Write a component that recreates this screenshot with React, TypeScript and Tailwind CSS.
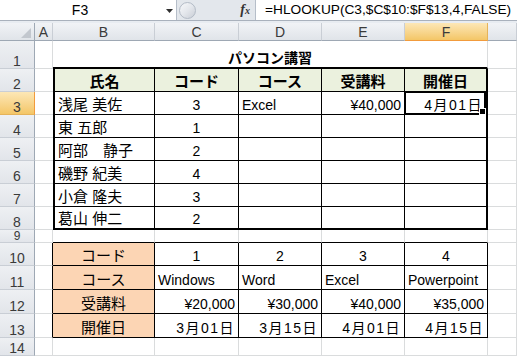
type Align = 'l' | 'c' | 'r';

interface CellData {
  t: string;
  a?: Align;
  b?: boolean;
  jp?: boolean;
  date?: boolean;
  fill?: 'head' | 'orange';
}

const GRID = 'border-[#dadcdd]';

const people = [
  ['浅尾 美佐', '3'],
  ['東 五郎', '1'],
  ['阿部　静子', '2'],
  ['磯野 紀美', '4'],
  ['小倉 隆夫', '3'],
  ['葛山 伸二', '2'],
];

const lookup: { label: string; values: string[]; a: Align; date?: boolean }[] = [
  { label: 'コード', values: ['1', '2', '3', '4'], a: 'c' },
  { label: 'コース', values: ['Windows', 'Word', 'Excel', 'Powerpoint'], a: 'l' },
  { label: '受講料', values: ['¥20,000', '¥30,000', '¥40,000', '¥35,000'], a: 'r' },
  { label: '開催日', values: ['3月01日', '3月15日', '4月01日', '4月15日'], a: 'r', date: true },
];

// cell contents for columns B..F, keyed by row number
function buildSheet(): Record<number, (CellData | null)[]> {
  const sheet: Record<number, (CellData | null)[]> = {};
  sheet[2] = ['氏名', 'コード', 'コース', '受講料', '開催日'].map((t) => ({
    t,
    a: 'c' as Align,
    b: true,
    jp: true,
    fill: 'head' as const,
  }));
  people.forEach(([name, code], i) => {
    const row: (CellData | null)[] = [
      { t: name, a: 'l', jp: true },
      { t: code, a: 'c' },
      null,
      null,
      null,
    ];
    if (i === 0) {
      row[2] = { t: 'Excel', a: 'l' };
      row[3] = { t: '¥40,000', a: 'r' };
      row[4] = { t: '4月01日', a: 'r', date: true };
    }
    sheet[3 + i] = row;
  });
  lookup.forEach((l, i) => {
    sheet[10 + i] = [
      { t: l.label, a: 'c', jp: true, fill: 'orange' },
      ...l.values.map((v) => ({ t: v, a: l.a, date: l.date })),
    ];
  });
  return sheet;
}

const sheet = buildSheet();
const rowNums = [1, 2, 3, 4, 5, 6, 7, 8, 9, 10, 11, 12, 13, 14];
const colLetters = ['A', 'B', 'C', 'D', 'E', 'F', ''];

function rightBorder(r: number, c: number) {
  const t1 = r >= 2 && r <= 8;
  const t2 = r >= 10 && r <= 13;
  if (c === 1) return t2 ? 'border-r border-r-black' : t1 ? 'border-r-0' : 'border-r border-r-[#dadcdd]';
  if (c >= 2 && c <= 5) return t1 || t2 ? 'border-r border-r-black' : 'border-r border-r-[#dadcdd]';
  if (c === 6) return t1 ? 'border-r-2 border-r-black' : t2 ? 'border-r border-r-black' : 'border-r border-r-[#dadcdd]';
  return 'border-r border-r-[#dadcdd]';
}

function bottomBorder(r: number, c: number) {
  if (c >= 2 && c <= 6) {
    if (r === 1 || r === 8) return 'border-b-2 border-b-black';
    if ((r >= 2 && r <= 7) || (r >= 9 && r <= 13)) return 'border-b border-b-black';
  }
  return 'border-b border-b-[#dadcdd]';
}

const alignClass = { l: 'justify-start', c: 'justify-center', r: 'justify-end' };

function FormulaBar() {
  return (
    <>
      <div className="flex h-[21px] border-b border-[#a9b1bc] bg-[#e3e7ec]">
        <div className="relative flex w-[177px] items-center border-r border-[#b6bec9] bg-white">
          <span className="w-[160px] text-center text-[14px] leading-none text-black">F3</span>
          <svg className="absolute left-[166px] top-[9px]" width="7" height="4" viewBox="0 0 7 4">
            <path d="M0 0h7L3.5 4z" fill="#2f2f2f" />
          </svg>
        </div>
        <div className="flex w-[78px] items-center">
          <div className="ml-[2px] h-[17px] w-[17px] rounded-full border border-[#b3bbc6] bg-gradient-to-br from-[#f7f8fa] via-[#e4e7ec] to-[#c9ced6]" />
          <span className="ml-auto mr-[5px] font-['Liberation_Serif',serif] text-[14px] font-bold italic leading-none text-[#333]">
            f<span className="text-[10px]">x</span>
          </span>
        </div>
        <div className="flex flex-1 items-center whitespace-nowrap border-l border-[#b6bec9] bg-white pl-[9px] text-[13.7px] leading-none text-black">
          =HLOOKUP(C3,$C$10:$F$13,4,FALSE)
        </div>
      </div>
      <div className="h-[2px] bg-[#e8ecf1]" />
    </>
  );
}

function CornerCell() {
  return (
    <div className="relative border-b border-r border-[#9ea8b4] bg-gradient-to-b from-[#f1f3f6] to-[#e0e4e9]">
      <svg className="absolute left-[21px] top-[5px]" width="10" height="10" viewBox="0 0 10 10">
        <path d="M10 0V10H0z" fill="#c2c7ce" />
      </svg>
    </div>
  );
}

export default function App() {
  return (
    <div className="h-[357px] w-[517px] overflow-hidden bg-white font-['Liberation_Sans','Noto_Sans_CJK_JP',sans-serif] text-black">
      <FormulaBar />
      <div className="grid grid-cols-[35px_18px_102px_84px_83px_83px_83px_1fr] grid-rows-[18px_28px_23px_23px_23px_23px_23px_23px_23px_13px_23px_24px_24px_24px_18px]">
        {/* column headers */}
        <CornerCell />
        {colLetters.map((letter, i) =>
          letter === 'F' ? (
            <div
              key={i}
              className="flex items-center justify-center border-b border-r border-b-[#f29b3c] border-r-[#e5b35a] bg-gradient-to-b from-[#fce7b6] to-[#f4c666] text-[14px] leading-none text-[#3a3a3a]"
            >
              {letter}
            </div>
          ) : (
            <div
              key={i}
              className="flex items-center justify-center border-b border-r border-b-[#9ea8b4] border-r-[#c9ced5] bg-gradient-to-b from-[#f1f3f6] to-[#e0e4e9] text-[14px] leading-none text-[#3a3a3a]"
            >
              {letter}
            </div>
          ),
        )}

        {rowNums.map((r) => (
          <Row key={r} r={r} />
        ))}
      </div>
    </div>
  );
}

function Row({ r }: { r: number }) {
  const cells = sheet[r];
  return (
    <>
      {r === 3 ? (
        <div className="flex items-end justify-center border-b border-r border-b-[#e5b35a] border-r-[#f29b3c] bg-gradient-to-b from-[#fce7b6] to-[#f4c666] text-[14px] leading-none text-[#3a3a3a]">
          {r}
        </div>
      ) : (
        <div
          className={`flex items-end justify-center overflow-hidden border-b border-r border-b-[#c9ced5] border-r-[#9ea8b4] bg-gradient-to-b from-[#eef0f3] to-[#e2e5ea] text-[#3a3a3a] ${r === 9 ? 'text-[12px] leading-[12px]' : 'text-[14px] leading-none'}`}
        >
          {r}
        </div>
      )}

      {/* column A */}
      <div className={`${rightBorder(r, 1)} ${bottomBorder(r, 1)}`} />

      {r === 1 ? (
        <div className={`col-span-5 flex items-end justify-center border-r ${GRID} border-b-2 border-b-black pb-[2px] text-[14px] font-bold leading-none`}>
          パソコン講習
        </div>
      ) : (
        [2, 3, 4, 5, 6].map((c) => {
          const cell = cells ? cells[c - 2] : null;
          const left = c === 2 && r >= 2 && r <= 8 ? 'border-l-2 border-l-black' : '';
          const fill = cell?.fill === 'head' ? 'bg-[#ebf1de]' : cell?.fill === 'orange' ? 'bg-[#fcd5b4]' : '';
          const size = cell?.jp ? 'text-[15px]' : 'text-[14px]';
          return (
            <div
              key={c}
              className={`relative flex items-end whitespace-nowrap px-[3px] pb-[2px] leading-none ${left} ${rightBorder(r, c)} ${bottomBorder(r, c)} ${fill} ${size} ${cell?.b ? 'font-bold' : ''} ${alignClass[cell?.a ?? 'l']}`}
            >
              {cell?.date ? <span className="tracking-[1.5px]">{cell.t}</span> : cell?.t}
              {r === 3 && c === 6 && (
                <div className="absolute -left-[1px] -top-[1px] right-0 -bottom-[1px] z-10 border-2 border-black shadow-[inset_0_0_0_1px_white]">
                  <div className="absolute -bottom-[2px] -right-[2px] h-[7px] w-[7px] border border-white bg-black" />
                </div>
              )}
            </div>
          );
        })
      )}

      {/* column G */}
      <div className={`${rightBorder(r, 7)} ${bottomBorder(r, 7)}`} />
    </>
  );
}
